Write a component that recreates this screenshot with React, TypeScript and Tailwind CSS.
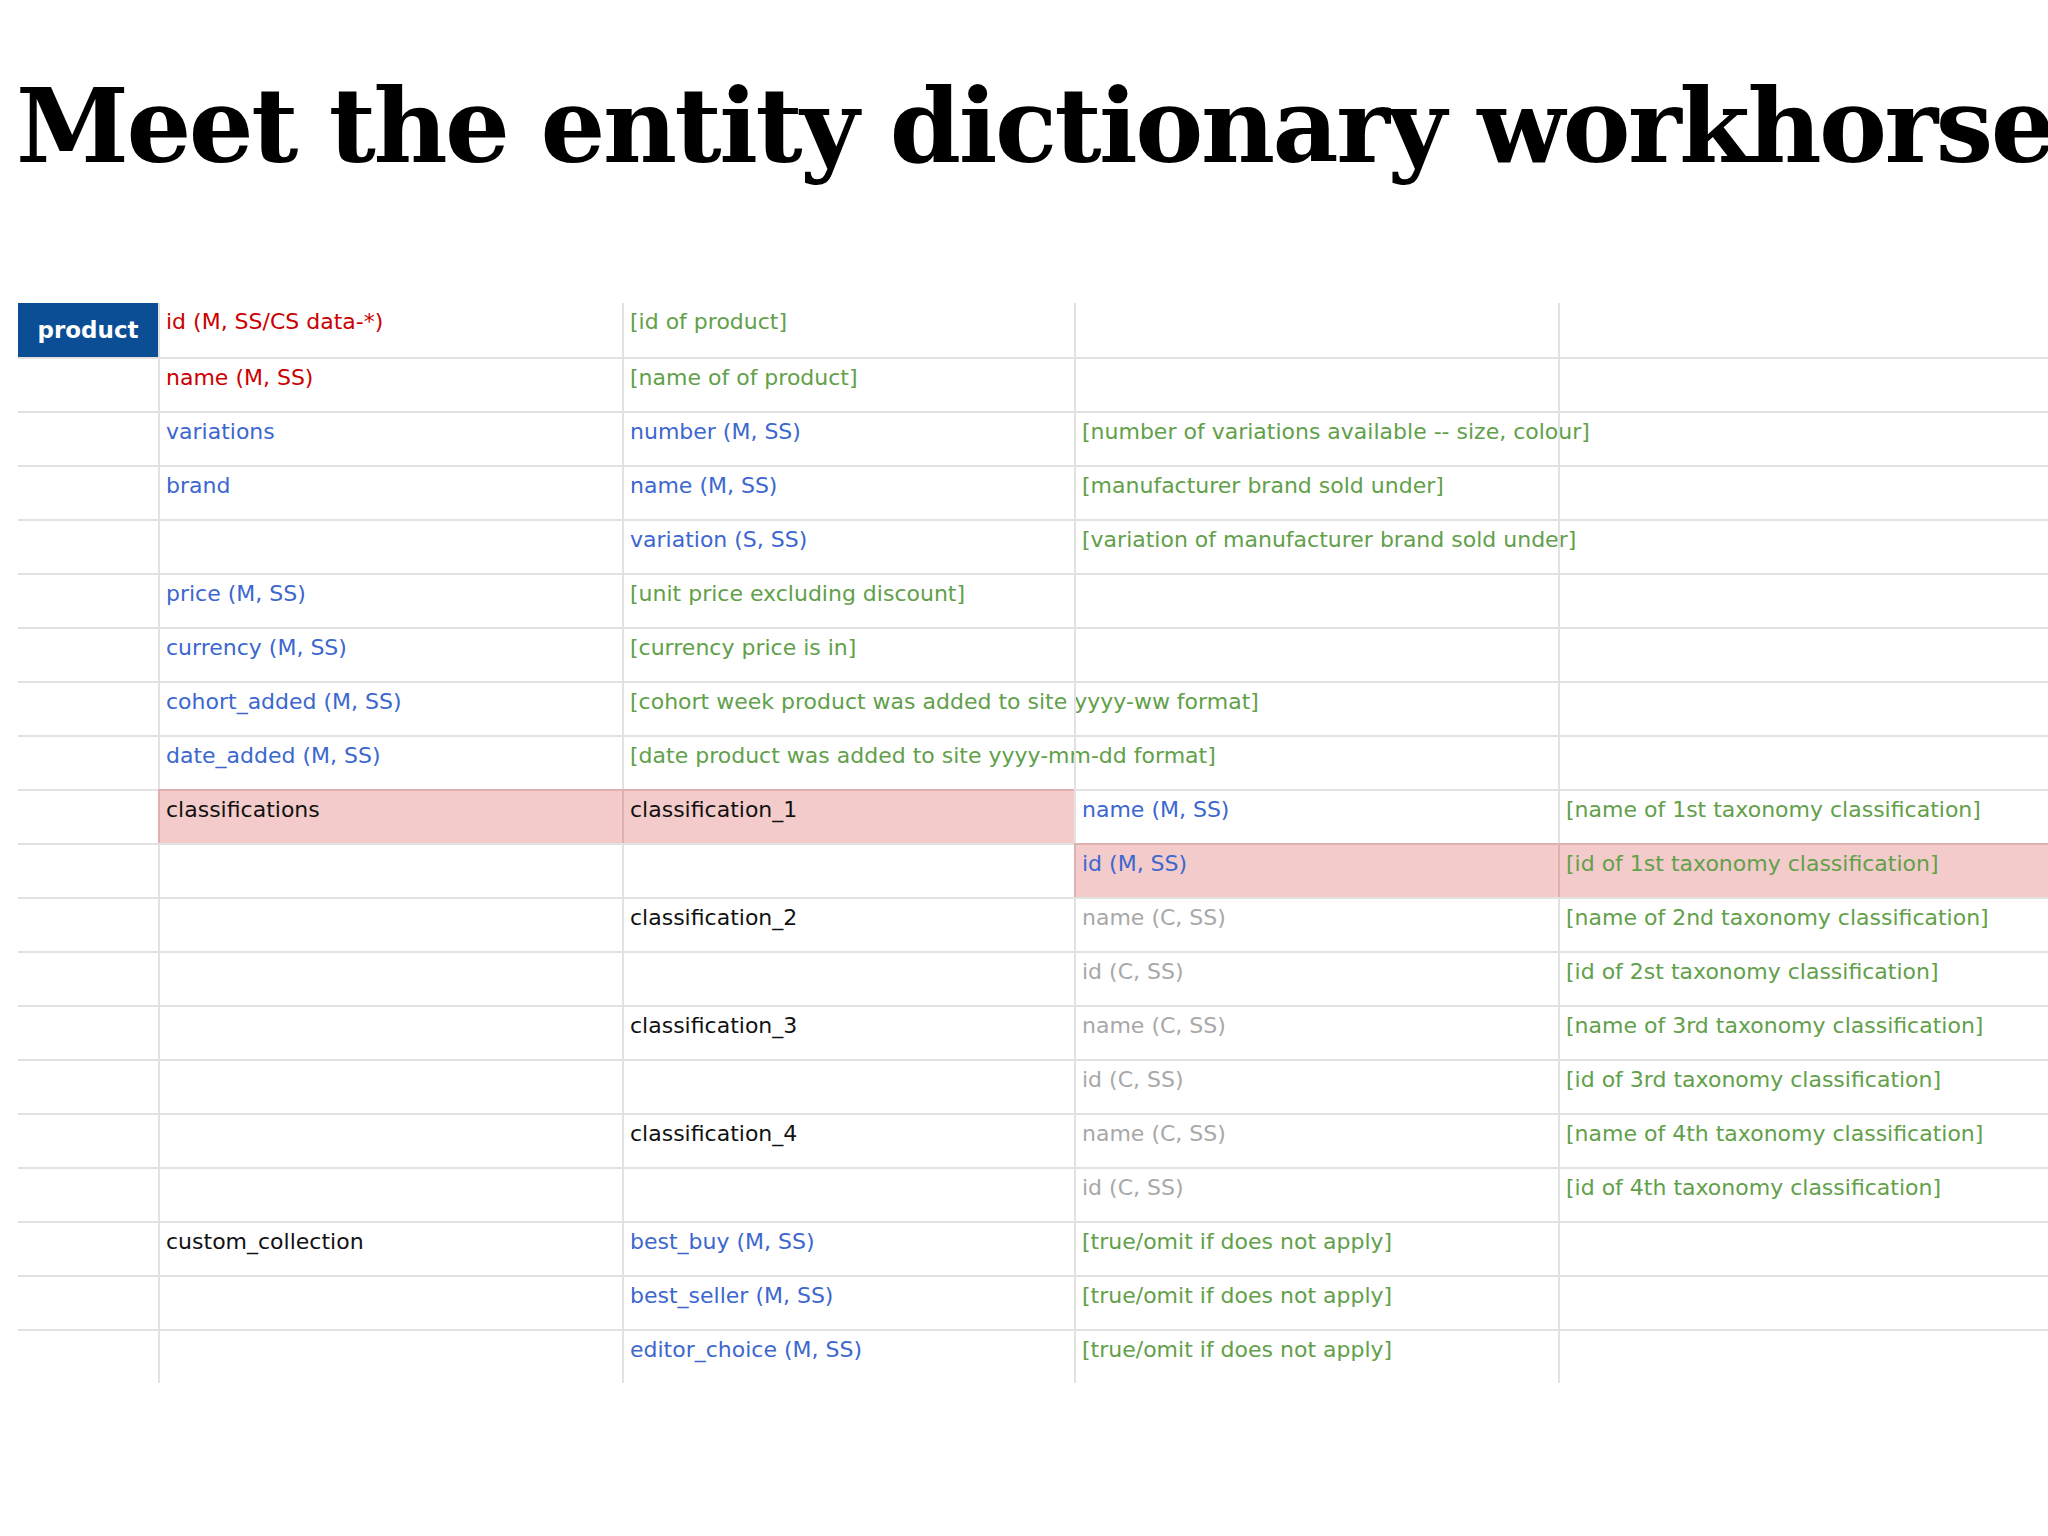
type C = { t?: string; c?: "r" | "b" | "g" | "k" | "x"; pink?: boolean };

const R = (t: string): C => ({ t, c: "r" });
const B = (t: string): C => ({ t, c: "b" });
const G = (t: string): C => ({ t, c: "g" });
const K = (t: string): C => ({ t, c: "k" });
const X = (t: string): C => ({ t, c: "x" });
const E: C = {};

const rows: C[][] = [
  [R("id (M, SS/CS data-*)"), G("[id of product]"), E, E],
  [R("name (M, SS)"), G("[name of of product]"), E, E],
  [B("variations"), B("number (M, SS)"), G("[number of variations available -- size, colour]"), E],
  [B("brand"), B("name (M, SS)"), G("[manufacturer brand sold under]"), E],
  [E, B("variation (S, SS)"), G("[variation of manufacturer brand sold under]"), E],
  [B("price (M, SS)"), G("[unit price excluding discount]"), E, E],
  [B("currency (M, SS)"), G("[currency price is in]"), E, E],
  [B("cohort_added (M, SS)"), G("[cohort week product was added to site yyyy-ww format]"), E, E],
  [B("date_added (M, SS)"), G("[date product was added to site yyyy-mm-dd format]"), E, E],
  [{ ...K("classifications"), pink: true }, { ...K("classification_1"), pink: true }, B("name (M, SS)"), G("[name of 1st taxonomy classification]")],
  [E, E, { ...B("id (M, SS)"), pink: true }, { ...G("[id of 1st taxonomy classification]"), pink: true }],
  [E, K("classification_2"), X("name (C, SS)"), G("[name of 2nd taxonomy classification]")],
  [E, E, X("id (C, SS)"), G("[id of 2st taxonomy classification]")],
  [E, K("classification_3"), X("name (C, SS)"), G("[name of 3rd taxonomy classification]")],
  [E, E, X("id (C, SS)"), G("[id of 3rd taxonomy classification]")],
  [E, K("classification_4"), X("name (C, SS)"), G("[name of 4th taxonomy classification]")],
  [E, E, X("id (C, SS)"), G("[id of 4th taxonomy classification]")],
  [K("custom_collection"), B("best_buy (M, SS)"), G("[true/omit if does not apply]"), E],
  [E, B("best_seller (M, SS)"), G("[true/omit if does not apply]"), E],
  [E, B("editor_choice (M, SS)"), G("[true/omit if does not apply]"), E],
];

const color = {
  r: "text-[#cc0000]",
  b: "text-[#3c67cf]",
  g: "text-[#62a04a]",
  k: "text-[#111111]",
  x: "text-[#a8a8a8]",
};

export default function App() {
  return (
    <div className="w-[2048px] h-[1536px] bg-white overflow-hidden">
      <h1
        className="pl-[16px] pt-[66px] text-[102px] leading-[120px] font-bold text-black tracking-[-2.5px] whitespace-nowrap"
        style={{ fontFamily: '"DejaVu Serif", serif' }}
      >
        Meet the entity dictionary workhorse
      </h1>
      <div
        className="mt-[117px] ml-[18px] grid grid-cols-[140px_464px_452px_484px_1fr] text-[22px]"
        style={{ fontFamily: '"DejaVu Sans", Verdana, sans-serif' }}
      >
        {rows.map((row, i) => (
          <>
            {i === 0 ? (
              <div key={`p${i}`} className="h-[54px] bg-[#0b4e95] text-white font-bold flex items-center justify-center text-[23px]">
                product
              </div>
            ) : (
              <div key={`p${i}`} className="h-[54px] border-t-2 border-[#e2e2e2]" />
            )}
            {row.map((cell, j) => (
              <div
                key={`${i}-${j}`}
                className={`h-[54px] px-[6px] pt-[2px] whitespace-nowrap border-l-2 ${
                  i > 0 ? "border-t-2" : ""
                } ${cell.pink ? "bg-[#f4cbcb] border-[#dfb0b0]" : "border-[#e2e2e2]"} ${
                  cell.c ? color[cell.c] : ""
                }`}
              >
                {cell.t}
              </div>
            ))}
          </>
        ))}
      </div>
    </div>
  );
}
